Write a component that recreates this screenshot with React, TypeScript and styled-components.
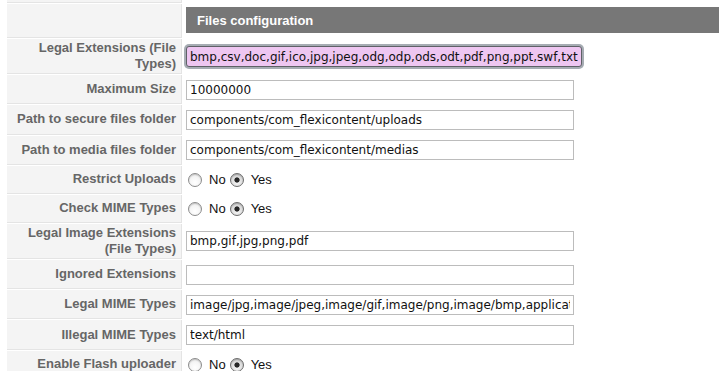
import React from 'react';
import styled, { createGlobalStyle } from 'styled-components';

const GlobalStyle = createGlobalStyle`
    html, body {
        margin: 0;
        padding: 0;
        background: #fff;
        overflow: hidden;
    }
    body {
        font-family: 'Liberation Sans', Arial, sans-serif;
    }
`;

type Field =
    | { kind: 'text'; label: string; value: string; focused?: boolean }
    | { kind: 'radio'; label: string; name: string; checked: 'no' | 'yes' };

const fields: Field[] = [
    {
        kind: 'text',
        label: 'Legal Extensions (File Types)',
        value: 'bmp,csv,doc,gif,ico,jpg,jpeg,odg,odp,ods,odt,pdf,png,ppt,swf,txt',
        focused: true,
    },
    { kind: 'text', label: 'Maximum Size', value: '10000000' },
    { kind: 'text', label: 'Path to secure files folder', value: 'components/com_flexicontent/uploads' },
    { kind: 'text', label: 'Path to media files folder', value: 'components/com_flexicontent/medias' },
    { kind: 'radio', label: 'Restrict Uploads', name: 'restrict', checked: 'yes' },
    { kind: 'radio', label: 'Check MIME Types', name: 'checkmime', checked: 'yes' },
    { kind: 'text', label: 'Legal Image Extensions (File Types)', value: 'bmp,gif,jpg,png,pdf' },
    { kind: 'text', label: 'Ignored Extensions', value: '' },
    {
        kind: 'text',
        label: 'Legal MIME Types',
        value: 'image/jpg,image/jpeg,image/gif,image/png,image/bmp,application/x-shockwave-flash,application/msword',
    },
    { kind: 'text', label: 'Illegal MIME Types', value: 'text/html' },
    { kind: 'radio', label: 'Enable Flash uploader', name: 'flash', checked: 'yes' },
];

export default function App() {
    return (
        <>
            <GlobalStyle />
            <ConfigTable>
                <KeyCell $stub />
                <ValueCell $variant="stub" />

                <KeyCell />
                <ValueCell $variant="header">
                    <SectionTitle>Files configuration</SectionTitle>
                </ValueCell>

                {fields.map((field) => (
                    <React.Fragment key={field.label}>
                        <KeyCell>
                            <KeyLabel>{field.label}</KeyLabel>
                        </KeyCell>
                        {field.kind === 'text' ? (
                            <ValueCell $variant="text">
                                <TextInput
                                    type="text"
                                    defaultValue={field.value}
                                    $focused={!!field.focused}
                                    readOnly
                                />
                            </ValueCell>
                        ) : (
                            <ValueCell $variant="radio">
                                <RadioGroup>
                                    <RadioOption>
                                        <Radio
                                            type="radio"
                                            name={field.name}
                                            defaultChecked={field.checked === 'no'}
                                        />
                                        No
                                    </RadioOption>
                                    <RadioOption>
                                        <Radio
                                            type="radio"
                                            name={field.name}
                                            defaultChecked={field.checked === 'yes'}
                                        />
                                        Yes
                                    </RadioOption>
                                </RadioGroup>
                            </ValueCell>
                        )}
                    </React.Fragment>
                ))}
            </ConfigTable>
        </>
    );
}

const ConfigTable = styled.div`
    display: grid;
    grid-template-columns: 175px 1fr;
    column-gap: 1px;
    row-gap: 1px;
    padding-left: 7px;
`;

const KeyCell = styled.div<{ $stub?: boolean }>`
    display: flex;
    align-items: center;
    justify-content: flex-end;
    box-sizing: border-box;
    height: ${(p) => (p.$stub ? '3px' : 'auto')};
    padding: ${(p) => (p.$stub ? '0' : '1px 5px 1px 8px')};
    background: #f4f4f4;
    border-bottom: 1px solid #e4e4e4;
    border-right: 1px solid #e4e4e4;
`;

const KeyLabel = styled.span`
    font-family: 'Liberation Sans', Arial, sans-serif;
    font-weight: bold;
    font-size: 13px;
    line-height: 16px;
    color: #666;
    text-align: right;
`;

type CellVariant = 'stub' | 'header' | 'text' | 'radio';

const cellHeights: Record<CellVariant, string> = {
    stub: 'height: 3px;',
    header: 'height: 34px; padding: 3px 0 5px 3px;',
    text: 'min-height: 29.3px; padding: 4px 0 4px 3px;',
    radio: 'min-height: 28px; padding: 0 0 0 3px;',
};

const ValueCell = styled.div<{ $variant: CellVariant }>`
    display: flex;
    align-items: center;
    box-sizing: border-box;
    ${(p) => cellHeights[p.$variant]}
`;

const SectionTitle = styled.div`
    flex: 1;
    align-self: stretch;
    display: flex;
    align-items: center;
    padding-left: 11px;
    background: #777;
    color: #fff;
    font-family: 'Liberation Sans', Arial, sans-serif;
    font-weight: bold;
    font-size: 13px;
`;

const TextInput = styled.input<{ $focused: boolean }>`
    box-sizing: border-box;
    width: ${(p) => (p.$focused ? '396px' : '388px')};
    height: ${(p) => (p.$focused ? '21px' : '20px')};
    margin: 0;
    padding: 0 3px;
    font-family: 'DejaVu Sans', 'Lucida Grande', sans-serif;
    font-size: 12px;
    color: #111;
    background: ${(p) => (p.$focused ? '#eec6f1' : '#fff')};
    border: 1px solid ${(p) => (p.$focused ? '#5e6166' : '#bcbcbc')};
    border-radius: ${(p) => (p.$focused ? '3px' : '0')};
    box-shadow: ${(p) => (p.$focused ? '0 0 0 2px #a6acb3' : 'none')};
    outline: none;
`;

const RadioGroup = styled.div`
    display: flex;
    align-items: center;
    gap: 4px;
    padding-left: 2px;
`;

const RadioOption = styled.label`
    display: flex;
    align-items: center;
    gap: 7px;
    font-family: 'Liberation Sans', Arial, sans-serif;
    font-size: 13px;
    color: #111;
`;

const Radio = styled.input`
    appearance: none;
    box-sizing: border-box;
    width: 14px;
    height: 14px;
    margin: 0;
    border-radius: 50%;
    border: 1px solid #8c8c8c;
    background: radial-gradient(circle at 50% 70%, #ffffff 0%, #f4f4f4 55%, #d6d6d6 100%);
    box-shadow: inset 0 1px 1px rgba(0, 0, 0, 0.15);

    &:checked {
        border-color: #6c6c6c;
        background:
            radial-gradient(circle at 50% 50%, #262626 0, #262626 2.2px, transparent 3px),
            radial-gradient(circle at 50% 70%, #f6f6f6 0%, #d9d9d9 60%, #a9a9a9 100%);
    }
`;
